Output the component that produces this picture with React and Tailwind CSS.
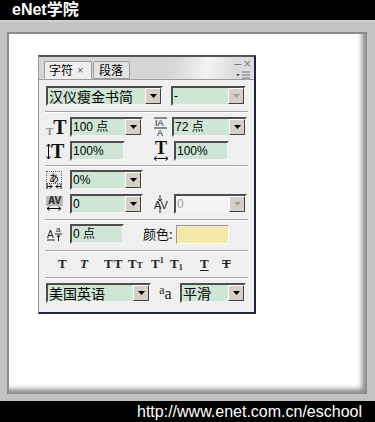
import React from 'react';

const cjk = { fontFamily: '"Noto Sans CJK SC", "Liberation Sans", sans-serif' };
const latin = { fontFamily: '"Liberation Sans", "Noto Sans CJK SC", sans-serif' };
const serif = { fontFamily: '"Liberation Serif", "DejaVu Serif", serif' };

const DropBtn = ({ disabled }) => (
  <div className="w-[16px] h-[16px] bg-[#d4d0c8] border border-t-white border-l-white border-b-[#404040] border-r-[#404040] flex items-center justify-center shrink-0">
    <svg width="7" height="4" viewBox="0 0 7 4">
      <path d="M0 0H7L3.5 4Z" fill={disabled ? '#a0a0a0' : '#000'} />
    </svg>
  </div>
);

const Field = ({ w, children, arrow, disabled, big }) => (
  <div
    className={`${w} h-[20px] flex items-center justify-between border-2 border-t-[#4e4e4e] border-l-[#4e4e4e] border-b-[#f2f2f2] border-r-[#f2f2f2] ${disabled ? 'bg-[#f4f4f4] text-[#a0a0a0]' : 'bg-[#cfe6d7] text-black'}`}
  >
    <span
      className={`pl-[1px] whitespace-nowrap ${big ? 'text-[14px] leading-[16px]' : 'text-[12px] leading-[16px]'}`}
      style={big ? cjk : latin}
    >
      {children}
    </span>
    {arrow && <DropBtn disabled={arrow === 'off'} />}
  </div>
);

const Sep = () => (
  <div className="mx-[6px] h-[2px] border-t border-t-[#a3a3a3] border-b border-b-white" />
);

const Arrow2H = () => (
  <svg width="16" height="5" viewBox="0 0 16 5" className="block">
    <path d="M1 2.5H15M1 2.5L3.5 0.5M1 2.5L3.5 4.5M15 2.5L12.5 0.5M15 2.5L12.5 4.5" stroke="#000" strokeWidth="1" fill="none" />
  </svg>
);

const IconSize = () => (
  <div className="w-[24px] h-[20px] flex items-end" style={serif}>
    <span className="text-[11px] leading-[12px] text-[#8a8a8a] font-bold">T</span>
    <span className="text-[20px] leading-[19px] font-bold text-[#111]">T</span>
  </div>
);

const IconLeading = () => (
  <svg width="16" height="20" viewBox="0 0 16 20" className="block">
    <text x="2" y="9" fontSize="9" fontFamily="Liberation Sans" fill="#222">IA</text>
    <path d="M1 1H14" stroke="#222" strokeWidth="1" />
    <path d="M1 11H14" stroke="#222" strokeWidth="1" />
    <text x="4" y="19" fontSize="9" fontFamily="Liberation Sans" fill="#222">A</text>
  </svg>
);

const IconVScale = () => (
  <div className="w-[24px] h-[20px] flex items-center" style={serif}>
    <svg width="5" height="17" viewBox="0 0 5 17" className="block">
      <path d="M2.5 1V16M2.5 1L0.5 3.5M2.5 1L4.5 3.5M2.5 16L0.5 13.5M2.5 16L4.5 13.5" stroke="#000" fill="none" />
    </svg>
    <span className="text-[20px] leading-[19px] font-bold text-[#111]">T</span>
  </div>
);

const IconHScale = () => (
  <div className="w-[21px] h-[20px] flex flex-col items-start" style={serif}>
    <span className="text-[18px] leading-[15px] font-bold text-[#111] pl-[2px]">T</span>
    <Arrow2H />
  </div>
);

const IconTsume = () => (
  <div className="w-[24px] h-[20px] flex flex-col items-start pt-[1px]">
    <div className="w-[16px] h-[13px] border border-dotted border-[#555] flex items-center justify-center text-[10px] leading-[10px]" style={cjk}>
      あ
    </div>
    <svg width="16" height="5" viewBox="0 0 16 5" className="block">
      <path d="M1 2.5H6M6 2.5L4 0.5M6 2.5L4 4.5M15 2.5H10M10 2.5L12 0.5M10 2.5L12 4.5M1 0V5M15 0V5" stroke="#000" fill="none" />
    </svg>
  </div>
);

const IconTracking = () => (
  <div className="w-[24px] h-[20px] flex flex-col items-start pt-[2px]">
    <div className="w-[17px] h-[10px] bg-[#b8b8b8] text-[10px] leading-[10px] font-bold text-[#222] text-center" style={latin}>
      AV
    </div>
    <Arrow2H />
  </div>
);

const IconKern = () => (
  <svg width="19" height="20" viewBox="0 0 19 20" className="block">
    <path d="M7 1V7M7 7L5 5M7 7L9 5" stroke="#222" fill="none" />
    <text x="1" y="15" fontSize="11" fontFamily="Liberation Sans" fill="#222">A</text>
    <text x="7.5" y="15" fontSize="11" fontFamily="Liberation Sans" fill="#222">V</text>
    <path d="M7 13V19" stroke="#222" />
  </svg>
);

const IconBaseline = () => (
  <div className="w-[24px] h-[20px] flex items-center">
    <svg width="18" height="16" viewBox="0 0 18 16" className="block">
      <text x="1" y="12" fontSize="10" fontFamily="Liberation Sans" fill="#222">A</text>
      <text x="10" y="6" fontSize="8" fontFamily="Liberation Sans" fill="#222">a</text>
      <path d="M9 8H16" stroke="#222" />
      <path d="M12.5 15V9M12.5 9L11 11M12.5 9L14 11" stroke="#222" fill="none" />
      <path d="M1 14H9" stroke="#222" />
    </svg>
  </div>
);

const Tab = ({ active, children }) => (
  <div
    className={`h-[18px] flex items-center whitespace-nowrap border border-[#9c9c9c] rounded-t-[2px] text-[12px] leading-[14px] ${
      active ? 'bg-[#efefef] border-b-[#efefef] pl-[4px] w-[48px]' : 'bg-[#e3e3e3] pl-[5px] w-[37px] ml-[1px]'
    }`}
    style={cjk}
  >
    {children}
  </div>
);

const Panel = () => (
  <div className="w-[218px] h-[259px] bg-[#efefef] border-t-2 border-t-[#555] border-l border-l-[#9a9a9a] border-r-2 border-r-[#20253f] border-b-2 border-b-[#20253f] flex flex-col">
    {/* tab bar */}
    <div className="h-[23px] flex justify-between border-b border-b-[#9c9c9c] bg-[linear-gradient(100deg,#d6d6d6_62%,#f4f4f4_78%,#dcdcdc_90%)]">
      <div className="flex items-end pl-[5px]">
        <Tab active>
          <span>字符</span>
          <span className="ml-[4px] text-[11px] text-[#666]" style={latin}>×</span>
        </Tab>
        <Tab>段落</Tab>
      </div>
      <div className="flex flex-col items-end pr-[3px] pt-[1px] text-[#7a7a7a]" style={latin}>
        <div className="flex items-center gap-[2px] text-[13px] leading-[11px]">
          <span>–</span>
          <span>×</span>
        </div>
        <div className="flex items-center mt-[2px]">
          <svg width="15" height="8" viewBox="0 0 15 8" className="block">
            <path d="M0 3H4L2 5.5Z" fill="#555" />
            <path d="M6 1H14M6 4H14M6 7H14" stroke="#777" />
          </svg>
        </div>
      </div>
    </div>

    <div className="flex flex-col">
      {/* font family */}
      <div className="flex mt-[6px] pl-[7px]">
        <Field w="w-[117px]" arrow big>汉仪瘦金书简</Field>
        <div className="ml-[8px]">
          <Field w="w-[75px]" arrow="off">-</Field>
        </div>
      </div>
      <div className="mt-[5px]"><Sep /></div>

      {/* size / leading */}
      <div className="flex items-center mt-[4px] pl-[7px]">
        <IconSize />
        <Field w="w-[73px]" arrow>100 点</Field>
        <div className="w-[10px]" />
        <div className="w-[19px] h-[20px] flex items-center"><IconLeading /></div>
        <Field w="w-[75px]" arrow>72 点</Field>
      </div>

      {/* scale */}
      <div className="flex items-center mt-[4px] pl-[7px]">
        <IconVScale />
        <Field w="w-[55px]">100%</Field>
        <div className="w-[28px]" />
        <IconHScale />
        <Field w="w-[55px]">100%</Field>
      </div>
      <div className="mt-[4px]"><Sep /></div>

      {/* tsume */}
      <div className="flex items-center mt-[3px] pl-[7px]">
        <IconTsume />
        <Field w="w-[73px]" arrow>0%</Field>
      </div>

      {/* tracking / kerning */}
      <div className="flex items-center mt-[4px] pl-[7px]">
        <IconTracking />
        <Field w="w-[73px]" arrow>0</Field>
        <div className="w-[10px]" />
        <div className="w-[21px] h-[20px] flex items-center"><IconKern /></div>
        <Field w="w-[73px]" arrow="off" disabled>0</Field>
      </div>
      <div className="mt-[5px]"><Sep /></div>

      {/* baseline / colour */}
      <div className="flex items-center mt-[3px] pl-[7px]">
        <IconBaseline />
        <Field w="w-[54px]">0 点</Field>
        <span className="ml-[19px] w-[33px] text-[13px] leading-[16px] text-[#111]" style={cjk}>颜色:</span>
        <div className="w-[53px] h-[19px] bg-[#f3e7a9] border border-t-[#9a9a9a] border-l-[#9a9a9a] border-b-white border-r-white" />
      </div>
      <div className="mt-[6px]"><Sep /></div>

      {/* style buttons */}
      <div className="flex items-center h-[16px] mt-[4px] pl-[19px] text-[13px] leading-[16px] font-bold text-[#222]" style={serif}>
        <span className="w-[22px]">T</span>
        <span className="w-[24px] italic">T</span>
        <span className="w-[24px] tracking-[1px]">TT</span>
        <span className="w-[23px]">T<span className="text-[9px]">T</span></span>
        <span className="w-[19px]">T<span className="text-[8px] align-top leading-[10px]">1</span></span>
        <span className="w-[30px]">T<span className="text-[8px] align-bottom leading-[8px]">1</span></span>
        <span className="w-[22px] underline underline-offset-2">T</span>
        <span className="line-through">T</span>
      </div>
      <div className="mt-[5px]"><Sep /></div>

      {/* language / anti-alias */}
      <div className="flex items-center mt-[4px] pl-[7px]">
        <Field w="w-[105px]" arrow big>美国英语</Field>
        <div className="w-[29px] h-[20px] flex items-start justify-center pt-[1px]" style={serif}>
          <span className="text-[12px] leading-[12px] text-[#222]">a</span>
          <span className="text-[16px] leading-[16px] mt-[2px] text-[#222]">a</span>
        </div>
        <Field w="w-[66px]" arrow big>平滑</Field>
      </div>
    </div>
  </div>
);

export default function App() {
  return (
    <div className="w-[375px] h-[422px] flex flex-col bg-black overflow-hidden">
      <div className="h-[20px] pl-[12px] text-white font-bold text-[16px] leading-[20px]" style={latin}>
        eNet学院
      </div>
      <div className="h-[381px] bg-[#c2c2c2] pt-[10px] pl-[7px] pr-[8px] pb-[7px] flex border-t-2 border-t-[#d0d0d0]">
        <div className="flex-1 bg-white border-t-2 border-l-2 border-[#8a8a8a] shadow-[inset_-8px_-8px_5px_-3px_#8c8c8c] pl-[29px] pt-[21px]">
          <Panel />
        </div>
      </div>
      <div className="h-[21px] pr-[13px] text-right text-white text-[16px] leading-[21px]" style={latin}>
        http://www.enet.com.cn/eschool
      </div>
    </div>
  );
}
